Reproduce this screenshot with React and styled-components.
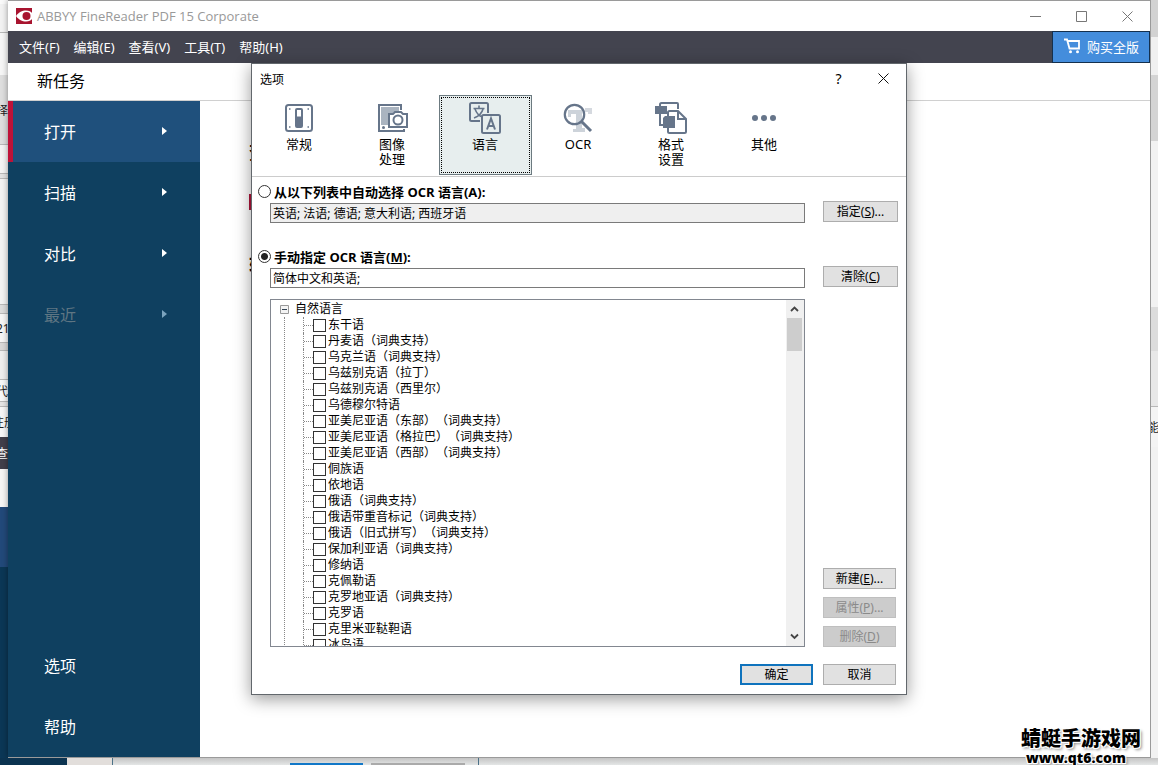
import { useState } from "react";
import styled, { createGlobalStyle, css } from "styled-components";

const languages = [
  "东干语",
  "丹麦语（词典支持）",
  "乌克兰语（词典支持）",
  "乌兹别克语（拉丁）",
  "乌兹别克语（西里尔）",
  "乌德穆尔特语",
  "亚美尼亚语（东部）（词典支持）",
  "亚美尼亚语（格拉巴）（词典支持）",
  "亚美尼亚语（西部）（词典支持）",
  "侗族语",
  "依地语",
  "俄语（词典支持）",
  "俄语带重音标记（词典支持）",
  "俄语（旧式拼写）（词典支持）",
  "保加利亚语（词典支持）",
  "修纳语",
  "克佩勒语",
  "克罗地亚语（词典支持）",
  "克罗语",
  "克里米亚鞑靼语",
  "冰岛语",
];

const menus = ["文件(F)", "编辑(E)", "查看(V)", "工具(T)", "帮助(H)"];

const tasks = [
  { label: "打开", active: true },
  { label: "扫描" },
  { label: "对比" },
  { label: "最近", disabled: true },
];

const tabs = [
  { id: "general", label: "常规", icon: <GeneralIcon /> },
  { id: "image", label: "图像处理", icon: <ImageIcon /> },
  { id: "languages", label: "语言", icon: <LanguageIcon /> },
  { id: "ocr", label: "OCR", icon: <OcrIcon /> },
  { id: "format", label: "格式设置", icon: <FormatIcon /> },
  { id: "other", label: "其他", icon: <OtherIcon /> },
];

export default function App() {
  return (
    <>
      <GlobalStyle />
      <Desktop>
        <LeftEdge />
        <AppWindow />
        <RightEdge />
        <BottomEdge />
        <OptionsDialog />
        <Watermark>
          <WatermarkName>蜻蜓手游戏网</WatermarkName>
          <WatermarkUrl>www.qt6.com</WatermarkUrl>
        </Watermark>
      </Desktop>
    </>
  );
}

function AppWindow() {
  return (
    <Window>
      <TitleBar>
        <LogoIcon />
        <WindowTitle>ABBYY FineReader PDF 15 Corporate</WindowTitle>
        <CaptionButton aria-label="最小化">
          <svg width="11" height="11" stroke="#777">
            <path d="M0 5.500h11" />
          </svg>
        </CaptionButton>
        <CaptionButton aria-label="最大化">
          <svg width="11" height="11" stroke="#777" fill="none">
            <path d="M.5.5h10v10H.5z" />
          </svg>
        </CaptionButton>
        <CaptionButton aria-label="关闭">
          <svg width="11" height="11" stroke="#777">
            <path d="M.5.5l10 10M10.500.5l-10 10" />
          </svg>
        </CaptionButton>
      </TitleBar>
      <MenuBar>
        {menus.map((menu) => (
          <MenuButton key={menu}>{menu}</MenuButton>
        ))}
        <BuyButton>
          <CartIcon />
          购买全版
        </BuyButton>
      </MenuBar>
      <TaskHeading>新任务</TaskHeading>
      <Workspace>
        <Sidebar>
          {tasks.map((task) => (
            <TaskButton
              key={task.label}
              $active={task.active}
              disabled={task.disabled}
            >
              {task.label}
              <svg width="5" height="8" fill="currentColor">
                <path d="M0 0l5 4-5 4z" />
              </svg>
            </TaskButton>
          ))}
          <SidebarSpacer />
          <TaskButton>选项</TaskButton>
          <TaskButton>帮助</TaskButton>
        </Sidebar>
        <Main>
          <MainHeading>查</MainHeading>
          <MainIcon />
          <MainHeading>转</MainHeading>
        </Main>
      </Workspace>
    </Window>
  );
}

function OptionsDialog() {
  const [activeTab, setActiveTab] = useState("languages");
  const [mode, setMode] = useState("manual");
  const [manual, setManual] = useState("简体中文和英语;");

  return (
    <Dialog role="dialog" aria-label="选项">
      <DialogTitleBar>
        <DialogTitle>选项</DialogTitle>
        <DialogCaptionButton aria-label="帮助">?</DialogCaptionButton>
        <DialogCaptionButton aria-label="关闭">
          <svg width="11" height="11" stroke="#111">
            <path d="M.5.5l10 10M10.500.5l-10 10" />
          </svg>
        </DialogCaptionButton>
      </DialogTitleBar>
      <TabBar>
        {tabs.map((tab) => (
          <TabButton
            key={tab.id}
            $active={tab.id === activeTab}
            onClick={() => setActiveTab(tab.id)}
          >
            {tab.icon}
            <TabLabel>{tab.label}</TabLabel>
          </TabButton>
        ))}
      </TabBar>
      <DialogBody>
        <ModeGroups>
          <div>
            <RadioLabel>
              <Radio
                name="mode"
                checked={mode === "auto"}
                onChange={() => setMode("auto")}
              />
              从以下列表中自动选择 OCR 语言(A):
            </RadioLabel>
            <FieldRow>
              <TextInput
                aria-label="自动选择的语言"
                readOnly
                value="英语; 法语; 德语; 意大利语; 西班牙语"
              />
              <Button $wide>
                指定(<u>S</u>)...
              </Button>
            </FieldRow>
          </div>
          <div>
            <RadioLabel>
              <Radio
                name="mode"
                checked={mode === "manual"}
                onChange={() => setMode("manual")}
              />
              <span>
                手动指定 OCR 语言(<u>M</u>):
              </span>
            </RadioLabel>
            <FieldRow>
              <TextInput
                aria-label="手动指定的语言"
                value={manual}
                onChange={(event) => setManual(event.target.value)}
              />
              <Button $wide>
                清除(<u>C</u>)
              </Button>
            </FieldRow>
          </div>
        </ModeGroups>
        <TreeRow>
          <TreeBox>
            <Tree>
              <TreeRoot>
                <TreeToggle aria-label="折叠">
                  <svg width="9" height="9" fill="none">
                    <path d="M.5.5h8v8h-8z" fill="#f4f4f4" stroke="#999" />
                    <path d="M2 4.500h5" stroke="#345" />
                  </svg>
                </TreeToggle>
                自然语言
              </TreeRoot>
              <TreeList>
                {languages.map((language) => (
                  <TreeItem key={language}>
                    <TreeLabel>
                      <Checkbox />
                      {language}
                    </TreeLabel>
                  </TreeItem>
                ))}
              </TreeList>
            </Tree>
            <ScrollBar>
              <ScrollArrow d="M1 6l3.500-3.500L8 6" />
              <ScrollThumb />
              <ScrollArrow d="M1 2.500L4.500 6 8 2.500" />
            </ScrollBar>
          </TreeBox>
          <SideButtons>
            <Button>
              新建(<u>E</u>)...
            </Button>
            <Button disabled>
              属性(<u>P</u>)...
            </Button>
            <Button disabled>
              删除(<u>D</u>)
            </Button>
          </SideButtons>
        </TreeRow>
        <DialogFooter>
          <Button $primary>确定</Button>
          <Button>取消</Button>
        </DialogFooter>
      </DialogBody>
    </Dialog>
  );
}

function ScrollArrow({ d }) {
  return (
    <ScrollButton aria-label="滚动">
      <svg width="9" height="9" fill="none" stroke="#444" strokeWidth="1.800">
        <path d={d} />
      </svg>
    </ScrollButton>
  );
}

/* parts of the windows that lie behind */

function LeftEdge() {
  return (
    <EdgeColumn>
      <EdgeBlock $height={4} $color="#fafafa" />
      <EdgeBlock $height={29} $color="#f2f2f2" $line />
      <EdgeBlock $height={42} $color="#f6f6f6" />
      <EdgeBlock $height={70} $color="#dedede" $line>
        <EdgeText>择</EdgeText>
      </EdgeBlock>
      <EdgeBlock $height={29} $color="#f4f4f4" $line />
      <EdgeBlock $height={5} $color="#e2e2e2" $line />
      <EdgeBlock $height={126} $color="#f3f3f3" $line />
      <EdgeBlock $height={9} $color="#dcdcdc" $line />
      <EdgeBlock $height={29} $color="#f6f6f6" $line>
        <EdgeText>21</EdgeText>
      </EdgeBlock>
      <EdgeBlock $height={8} $color="#d8d8d8" $line />
      <EdgeBlock $height={29} $color="#eeeeee" $line />
      <EdgeBlock $height={22} $color="#f8f8f8" $line>
        <EdgeText>代</EdgeText>
      </EdgeBlock>
      <EdgeBlock $height={5} $color="#e4e4e4" $line />
      <EdgeBlock $height={30} $color="#f6f6f6">
        <EdgeText $shift>注册</EdgeText>
      </EdgeBlock>
      <EdgeBlock $height={32} $color="#413f4a">
        <EdgeText $light>查</EdgeText>
      </EdgeBlock>
      <EdgeBlock $height={38} $color="#f6f5f4" />
      <EdgeBlock $height={60} $color="#22497a" />
      <EdgeBlock $grow $color="#0b3756" />
    </EdgeColumn>
  );
}

function RightEdge() {
  return (
    <EdgeColumn>
      <EdgeBlock $height={37} $color="#d2d2d2" />
      <EdgeBlock $height={38} $color="#f0f0f0" />
      <EdgeBlock $height={66} $color="#d4d4d4" />
      <EdgeBlock $height={166} $color="#f2f2f2" />
      <EdgeBlock $height={44} $color="#dcdcdc" />
      <EdgeBlock $height={56} $color="#e8e8e8" $line />
      <EdgeBlock $height={40} $color="#f4f4f4">
        <EdgeText>能</EdgeText>
      </EdgeBlock>
      <EdgeBlock $grow $color="#f2f2f2" />
    </EdgeColumn>
  );
}

function BottomEdge() {
  return (
    <EdgeRow>
      <EdgeNavy />
      <EdgeCream />
      <EdgePanel>
        <EdgeButton $primary />
        <EdgeButton />
      </EdgePanel>
    </EdgeRow>
  );
}

/* icons */

function LogoIcon() {
  return (
    <svg width="16" height="16" viewBox="0 0 16 16">
      <path d="M0 0h16v16H0z" fill="#a8142f" />
      <path
        d="M0 8C3 4 6 2.500 10 2.500c3 0 5 1 6 2.500v6c-1 1.500-3 2.500-6 2.500C6 13.500 3 12 0 8z"
        fill="#fff"
      />
      <circle cx="10.500" cy="8" r="4" fill="#a8142f" />
    </svg>
  );
}

function CartIcon() {
  return (
    <svg
      width="17"
      height="16"
      viewBox="0 0 17 16"
      fill="none"
      stroke="#fff"
      strokeWidth="1.800"
    >
      <path d="M0 1.500h3L5.500 10.500h9.500V3H4" />
      <circle cx="6.500" cy="13.700" r="1.500" fill="#fff" stroke="none" />
      <circle cx="13.500" cy="13.700" r="1.500" fill="#fff" stroke="none" />
    </svg>
  );
}

function GeneralIcon() {
  return (
    <svg width="32" height="32" viewBox="0 0 32 32" fill="none" stroke="#66758a">
      <rect x="3" y="3" width="26" height="26" rx="2.500" strokeWidth="2" />
      <rect x="13" y="7" width="6" height="18" rx="1" strokeWidth="2" />
      <path d="M14 15h4v9h-4z" fill="#66758a" />
      <path d="M6 7h1.500M24.500 7H26M6 25h1.500M24.500 25H26" strokeWidth="1.500" />
    </svg>
  );
}

function ImageIcon() {
  return (
    <svg
      width="32"
      height="32"
      viewBox="0 0 32 32"
      fill="none"
      stroke="#66758a"
      strokeWidth="2"
    >
      <path d="M5 5h18v5h-6v3h-5v10H5z" fill="#aab4c0" stroke="none" />
      <path d="M25 8V3H3v26h25v-2" />
      <circle cx="7.500" cy="25.500" r="1.500" fill="#66758a" stroke="none" />
      <path d="M13 12h4l2-2h6l2 2h4v13H13z" fill="#fff" />
      <circle cx="22" cy="18" r="4.500" />
    </svg>
  );
}

function LanguageIcon() {
  return (
    <svg
      width="32"
      height="32"
      viewBox="0 0 32 32"
      fill="none"
      stroke="#66758a"
      strokeWidth="2"
    >
      <path d="M11 19H2.500Q1 19 1 17.500V2.500Q1 1 2.500 1h15Q19 1 19 2.500V11" />
      <path
        d="M4.500 6.500h11M10 3.500v3M14 7C13 11 9 14.500 5 16M6 7c1.500 4 4 7 7.500 8"
        strokeWidth="1.600"
      />
      <rect x="13" y="13" width="18" height="18" rx="1.500" />
      <path d="M18 27.500l4-11 4 11M19.500 24h5" />
    </svg>
  );
}

function OcrIcon() {
  return (
    <svg width="32" height="32" viewBox="0 0 32 32" fill="none" stroke="#66758a">
      <path d="M6 8h14v18h3v4H11v-3h3V12H9v3H6z" fill="#cdd3da" stroke="none" />
      <path d="M23 6h7v6h-4v-2h-3z" fill="#d5d9df" stroke="none" />
      <circle cx="12.500" cy="12.500" r="9.700" strokeWidth="2.200" />
      <path d="M19.500 19.500l9.500 9.500" strokeWidth="3" />
    </svg>
  );
}

function FormatIcon() {
  return (
    <svg
      width="32"
      height="32"
      viewBox="0 0 32 32"
      fill="none"
      stroke="#66758a"
      strokeWidth="2"
    >
      <path d="M5 5V2.500Q5 1 6.500 1H22Q23 1 23 2v5M5 12v11h4" />
      <path d="M0 4h12v8H0z" fill="#66758a" stroke="none" />
      <path d="M13 15V10.500Q13 9 14.500 9H23l8 8v12.500Q31 31 29.500 31h-15Q13 31 13 29.500V26" />
      <path d="M23 9v8h8" />
      <path d="M10 14h10v12H8V16z" fill="#66758a" stroke="none" />
    </svg>
  );
}

function OtherIcon() {
  return (
    <svg width="32" height="32" viewBox="0 0 32 32" fill="#66758a">
      <circle cx="7" cy="16" r="3" />
      <circle cx="16" cy="16" r="3" />
      <circle cx="25" cy="16" r="3" />
    </svg>
  );
}

const GlobalStyle = createGlobalStyle`
  * {
    box-sizing: border-box;
  }

  body {
    margin: 0;
    font-family: "Noto Sans", "Noto Sans CJK SC", sans-serif;
    font-size: 12px;
    color: #000;
  }

  button,
  input {
    margin: 0;
    padding: 0;
    border: 0;
    font: inherit;
    color: inherit;
    background: none;
  }
`;

const Desktop = styled.div`
  position: relative;
  display: grid;
  grid-template-columns: 8px 1fr 7px;
  grid-template-rows: 1fr 7px;
  height: 100vh;
  overflow: hidden;
  background: #f0f0f0;
`;

const EdgeColumn = styled.div`
  display: flex;
  flex-direction: column;
  overflow: hidden;
`;

const EdgeBlock = styled.div`
  display: flex;
  align-items: center;
  flex: ${({ $grow }) => ($grow ? "1" : "none")};
  height: ${({ $height }) => ($height ? `${$height}px` : "auto")};
  background: ${({ $color }) => $color};
  border-bottom: ${({ $line }) => ($line ? "1px solid #b8b8b8" : "0")};
  overflow: hidden;
`;

const EdgeText = styled.span`
  flex: none;
  margin-left: ${({ $shift }) => ($shift ? "-8px" : "-4px")};
  font-size: 12px;
  color: ${({ $light }) => ($light ? "#fff" : "#222")};
`;

const EdgeRow = styled.div`
  grid-column: 1 / -1;
  display: flex;
  background: linear-gradient(#c4c4c4, #e4e6e6);
`;

const EdgeNavy = styled.div`
  width: 67px;
  background: #0b3350;
`;

const EdgeCream = styled.div`
  width: 45px;
  background: #e2dedb;
`;

const EdgePanel = styled.div`
  display: flex;
  align-items: flex-end;
  justify-content: flex-end;
  gap: 8px;
  width: 367px;
  padding-right: 13px;
  border: solid #4c7288;
  border-width: 0 1px;
`;

const EdgeButton = styled.div`
  width: ${({ $primary }) => ($primary ? "73px" : "94px")};
  height: 2px;
  background: ${({ $primary }) => ($primary ? "#1278c8" : "#aaa")};
`;

const Window = styled.div`
  display: flex;
  flex-direction: column;
  min-width: 0;
  border: solid #9a9a9a;
  border-width: 1px 1px 1px 0;
  background: #fff;
  box-shadow: 0 0 6px rgba(0, 0, 0, 0.4);
`;

const TitleBar = styled.header`
  display: flex;
  align-items: center;
  height: 30px;
  padding-left: 8px;
  color: #999;
`;

const WindowTitle = styled.span`
  flex: 1;
  margin-left: 5px;
  font-family: "Open Sans", sans-serif;
  font-size: 13px;
`;

const CaptionButton = styled.button`
  display: grid;
  place-items: center;
  width: 46px;
  height: 28px;
`;

const MenuBar = styled.nav`
  display: flex;
  align-items: stretch;
  height: 32px;
  padding-left: 11px;
  gap: 14px;
  font-size: 13px;
  color: #fff;
  background: #43444f;
`;

const MenuButton = styled.button`
  padding-bottom: 2px;
`;

const BuyButton = styled.button`
  display: flex;
  align-items: center;
  gap: 6px;
  margin-left: auto;
  padding: 0 10px 2px 11px;
  border: 1px solid #14304e;
  background: #448ddc;
`;

const TaskHeading = styled.h1`
  margin: 0;
  height: 38px;
  padding-left: 29px;
  border-bottom: 1px solid #d0d0d0;
  font-size: 16px;
  font-weight: 400;
  line-height: 36px;
`;

const Workspace = styled.div`
  display: flex;
  flex: 1;
  min-height: 0;
`;

const Sidebar = styled.aside`
  display: flex;
  flex-direction: column;
  width: 192px;
  background: #0f4060;
`;

const SidebarSpacer = styled.div`
  flex: 1;
`;

const TaskButton = styled.button`
  display: flex;
  align-items: center;
  justify-content: space-between;
  height: 61px;
  padding: 0 33px 2px 36px;
  font-size: 16px;
  color: #fff;

  ${({ $active }) =>
    $active &&
    css`
      padding-left: 31px;
      border-left: 5px solid #be1238;
      background: #1f507c;
    `}

  &:disabled {
    color: #5f7683;
  }

  &:disabled svg {
    color: #7ba3bd;
  }
`;

const Main = styled.main`
  flex: 1;
  padding: 36px 0 0 49px;
`;

const MainHeading = styled.h2`
  margin: 0;
  font-size: 20px;
  line-height: 32px;
`;

const MainIcon = styled.div`
  width: 16px;
  height: 16px;
  margin: 25px 0 40px;
  background: #b0143a;
`;

const Dialog = styled.section`
  position: absolute;
  top: 63px;
  left: 251px;
  width: 656px;
  border: 1px solid #62676c;
  background: #fff;
  box-shadow: 0 4px 16px rgba(0, 0, 0, 0.4);
`;

const DialogTitleBar = styled.header`
  display: flex;
  align-items: center;
  height: 29px;
  padding-left: 8px;
`;

const DialogTitle = styled.span`
  flex: 1;
`;

const DialogCaptionButton = styled.button`
  display: grid;
  place-items: center;
  width: 45px;
  height: 29px;
  font-size: 14px;
`;

const TabBar = styled.div`
  display: flex;
  height: 84px;
  padding: 2px 0 1px 1px;
  border-bottom: 1px solid #ccc;
`;

const TabButton = styled.button`
  display: flex;
  flex-direction: column;
  align-items: center;
  width: 93px;
  height: 80px;
  padding: 7px 1px 0 0;
  font-size: 13px;
  line-height: 15px;

  ${({ $active }) =>
    $active &&
    css`
      padding-top: 6px;
      border: 1px solid #6c7a80;
      outline: 1px dotted #000;
      outline-offset: -3px;
      background: #e7eeee;
    `}
`;

const TabLabel = styled.span`
  width: 28px;
  margin-top: 3px;
  text-align: center;
`;

const DialogBody = styled.div`
  padding: 5px 8px 9px 6px;
`;

const ModeGroups = styled.div`
  display: flex;
  flex-direction: column;
  gap: 13px;
`;

const RadioLabel = styled.label`
  display: flex;
  align-items: center;
  gap: 3px;
  height: 18px;
  font-family: "Open Sans", "Noto Sans CJK SC", sans-serif;
  font-size: 13px;
  font-weight: 700;
`;

const Radio = styled.input.attrs({ type: "radio" })`
  appearance: none;
  width: 13px;
  height: 13px;
  border: 1px solid #333;
  border-radius: 50%;

  &:checked {
    background: radial-gradient(#222 0 3px, #fff 4px);
  }
`;

const FieldRow = styled.div`
  display: flex;
  align-items: flex-start;
  justify-content: space-between;
  gap: 18px;
  height: 34px;
  padding: 1px 0 0 12px;
`;

const TextInput = styled.input`
  flex: 1;
  min-width: 0;
  height: 20px;
  margin-top: 2px;
  padding: 0 2px;
  border: 1px solid #7a7a7a;

  &:read-only {
    background: #efefef;
  }
`;

const Button = styled.button`
  width: ${({ $wide }) => ($wide ? "75px" : "73px")};
  height: 21px;
  border: 1px solid #adadad;
  line-height: 18px;
  background: #e1e1e1;

  ${({ $primary }) =>
    $primary &&
    css`
      border: 2px solid #0f73bd;
      line-height: 16px;
    `}

  &:disabled {
    border-color: #bfbfbf;
    color: #8a8a8a;
    background: #ccc;
  }
`;

const TreeRow = styled.div`
  display: flex;
  gap: 18px;
  padding: 0 2px 0 12px;
`;

const TreeBox = styled.div`
  display: flex;
  flex: 1;
  height: 348px;
  border: 1px solid #828790;
`;

const Tree = styled.div`
  flex: 1;
  overflow: hidden;
  padding: 1px 0 0 9px;
  line-height: 16px;
  text-spacing-trim: space-all;
`;

const TreeRoot = styled.div`
  display: flex;
  align-items: center;
  gap: 6px;
  height: 16px;
`;

const TreeToggle = styled.button`
  display: flex;
`;

const TreeList = styled.ul`
  margin: 0 0 0 4px;
  padding: 0 0 0 18px;
  border-left: 1px dotted #888;
  list-style: none;
`;

const TreeItem = styled.li`
  display: flex;
  align-items: center;
  height: 16px;
  border-left: 1px dotted #888;

  &::before {
    content: "";
    width: 9px;
    border-top: 1px dotted #888;
  }
`;

const TreeLabel = styled.label`
  display: flex;
  align-items: center;
  gap: 2px;
`;

const Checkbox = styled.input.attrs({ type: "checkbox" })`
  appearance: none;
  width: 13px;
  height: 13px;
  border: 1px solid #333;
  background: #fff;

  &:checked {
    background: #333;
  }
`;

const ScrollBar = styled.div`
  display: flex;
  flex-direction: column;
  width: 18px;
  padding: 1px 2px 1px 1px;
  background: #f0f0f0;
`;

const ScrollButton = styled.button`
  display: grid;
  place-items: center;
  height: 17px;
`;

const ScrollThumb = styled.div`
  height: 33px;
  margin-bottom: auto;
  background: #cdcdcd;
`;

const SideButtons = styled.div`
  display: flex;
  flex-direction: column;
  justify-content: flex-end;
  gap: 8px;
`;

const DialogFooter = styled.footer`
  display: flex;
  justify-content: flex-end;
  gap: 10px;
  padding: 17px 2px 0 0;
`;

const Watermark = styled.div`
  position: absolute;
  right: 17px;
  bottom: 0;
  text-align: center;
  font-weight: 900;
  text-shadow: 1px 1px 0 #fff, -1px -1px 0 #fff, 1px -1px 0 #fff,
    -1px 1px 0 #fff, 2px 2px 3px #888;
`;

const WatermarkName = styled.div`
  font-size: 20px;
  line-height: 24px;
`;

const WatermarkUrl = styled.div`
  padding-right: 10px;
  font-size: 14px;
  line-height: 14px;
`;
